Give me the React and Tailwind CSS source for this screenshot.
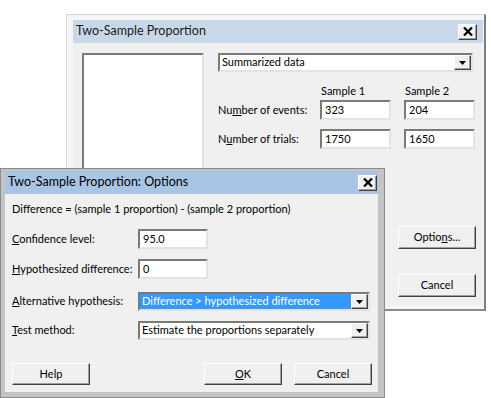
const font = { fontFamily: 'Lato, "Noto Sans", sans-serif' };

function CloseBtn() {
  return (
    <div className="shrink-0 w-[19px] h-[16px] bg-[#f0f0f0] border border-t-white border-l-white border-b-[#404040] border-r-[#404040] shadow-[inset_-1px_-1px_#a0a0a0] flex items-center justify-center">
      <svg width="10" height="9" viewBox="0 0 10 9">
        <path d="M1 0.5 L9 8.5 M9 0.5 L1 8.5" stroke="#000" strokeWidth="2.2" />
      </svg>
    </div>
  );
}

function Arrow() {
  return (
    <div className="shrink-0 w-[17px] h-full bg-[#f0f0f0] border border-t-white border-l-white border-b-[#404040] border-r-[#404040] shadow-[inset_-1px_-1px_#a0a0a0] flex items-center justify-center">
      <svg width="7" height="4" viewBox="0 0 7 4">
        <path d="M0 0 H7 L3.5 4 Z" fill="#000" />
      </svg>
    </div>
  );
}

function Box({ value, w }) {
  return (
    <div className={`${w} shrink-0 h-[20px] bg-white border-2 border-t-[#7a7a7a] border-l-[#7a7a7a] border-b-[#e3e3e3] border-r-[#e3e3e3] pl-[3px] flex items-center text-[11px] text-black`}>
      {value}
    </div>
  );
}

function Combo({ value, w, selected }) {
  return (
    <div className={`${w} shrink-0 h-[19px] bg-white border-2 border-t-[#7a7a7a] border-l-[#7a7a7a] border-b-[#e3e3e3] border-r-[#e3e3e3] flex items-stretch`}>
      <div className={`flex-1 flex items-center pl-[2px] text-[11px] whitespace-nowrap overflow-hidden ${selected ? 'bg-[#3399ff] text-white' : 'text-black'}`}>
        {value}
      </div>
      <Arrow />
    </div>
  );
}

function Btn({ children, w = 'w-[78px]', h = 'h-[23px]' }) {
  return (
    <div className={`${w} ${h} shrink-0 bg-[#f0f0f0] border border-t-white border-l-white border-b-[#404040] border-r-[#404040] shadow-[inset_-1px_-1px_#a0a0a0] flex items-center justify-center text-[11px] text-black`}>
      {children}
    </div>
  );
}

export default function App() {
  return (
    <div className="relative w-[491px] h-[398px] bg-white overflow-hidden whitespace-nowrap" style={font}>
      {/* main dialog */}
      <div className="absolute left-[66px] top-[14px] w-[420px] h-[297px] bg-[#f5f6f7] border-l border-t border-l-[#d6d6d6] border-t-[#d6d6d6] border-r-2 border-b-2 border-r-[#7c7c7c] border-b-[#8a8a8a] pl-[6px] pt-[5px] pr-[1px] pb-[3px] flex flex-col">
        <div className="h-[23px] shrink-0 bg-[#c9d8e9] flex items-center justify-between pl-[3px] pr-[6px]">
          <span className="text-[12.5px] text-[#1a1a1a]">Two-Sample Proportion</span>
          <CloseBtn />
        </div>
        <div className="flex-1 bg-[#f0f0f0] flex pl-[9px] pt-[10px]">
          <div className="w-[122px] h-[240px] shrink-0 bg-white border-2 border-t-[#7a7a7a] border-l-[#7a7a7a] border-b-[#e3e3e3] border-r-[#e3e3e3]" />
          <div className="ml-[14px] w-[258px] shrink-0 flex flex-col text-[11px] text-black">
            <Combo value="Summarized data" w="w-[255px]" />
            <div className="flex mt-[12px] h-[15px] items-center">
              <div className="w-[103px]" />
              <div className="w-[84px]">Sample 1</div>
              <div>Sample 2</div>
            </div>
            <div className="flex items-center mt-[1px]">
              <div className="w-[102px] shrink-0">Nu<u>m</u>ber of events:</div>
              <Box value="323" w="w-[71px]" />
              <div className="w-[13px] shrink-0" />
              <Box value="204" w="w-[71px]" />
            </div>
            <div className="flex items-center mt-[9px]">
              <div className="w-[102px] shrink-0">N<u>u</u>mber of trials:</div>
              <Box value="1750" w="w-[71px]" />
              <div className="w-[13px] shrink-0" />
              <Box value="1650" w="w-[71px]" />
            </div>
            <div className="self-end mt-[77px]">
              <Btn>Optio<u>n</u>s...</Btn>
            </div>
            <div className="self-end mt-[25px]">
              <Btn>Cancel</Btn>
            </div>
          </div>
        </div>
      </div>

      {/* options dialog */}
      <div className="absolute left-0 top-[168px] w-[385px] h-[230px] bg-[#c4c4c4] border border-[#8c8c8c] pl-[4px] pt-[2px] pr-[6px] pb-[5px] flex flex-col">
        <div className="h-[23px] shrink-0 bg-[#a9c5e6] flex items-center justify-between pl-[3px] pr-[1px]">
          <span className="text-[12.5px] text-black">Two-Sample Proportion: Options</span>
          <CloseBtn />
        </div>
        <div className="flex-1 bg-[#f0f0f0] flex flex-col pl-[7px] pt-[7px] text-[11px] text-black">
          <div className="h-[16px] flex items-center">Difference = (sample 1 proportion) - (sample 2 proportion)</div>
          <div className="flex items-center mt-[12px]">
            <div className="w-[126px] shrink-0"><u>C</u>onfidence level:</div>
            <Box value="95.0" w="w-[70px]" />
          </div>
          <div className="flex items-center mt-[10px]">
            <div className="w-[126px] shrink-0"><u>H</u>ypothesized difference:</div>
            <Box value="0" w="w-[70px]" />
          </div>
          <div className="flex items-center mt-[13px]">
            <div className="w-[126px] shrink-0"><u>A</u>lternative hypothesis:</div>
            <Combo value="Difference > hypothesized difference" w="w-[232px]" selected />
          </div>
          <div className="flex items-center mt-[10px]">
            <div className="w-[126px] shrink-0"><u>T</u>est method:</div>
            <Combo value="Estimate the proportions separately" w="w-[232px]" />
          </div>
          <div className="flex items-center mt-[23px]">
            <Btn h="h-[22px]">Help</Btn>
            <div className="w-[114px] shrink-0" />
            <Btn h="h-[22px]"><u>O</u>K</Btn>
            <div className="w-[12px] shrink-0" />
            <Btn h="h-[22px]">Cancel</Btn>
          </div>
        </div>
      </div>
    </div>
  );
}
